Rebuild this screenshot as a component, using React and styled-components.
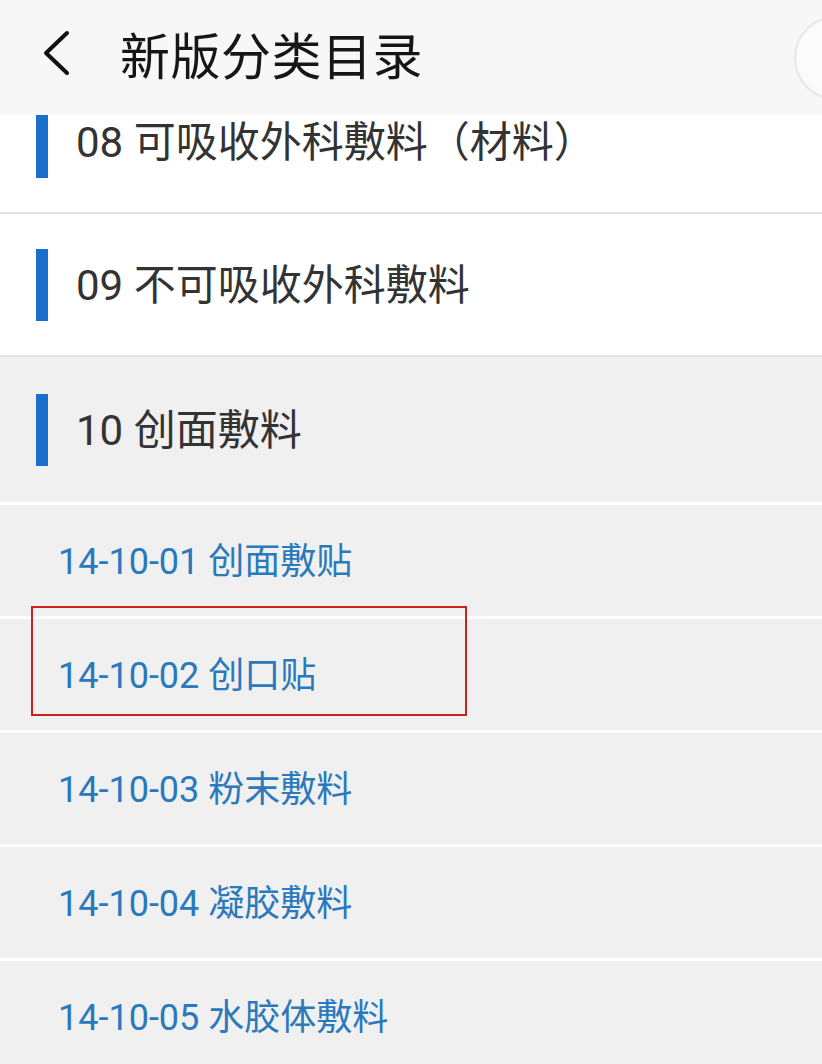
import React from "react";
import styled, { createGlobalStyle } from "styled-components";

const GlobalStyle = createGlobalStyle`
  html, body {
    margin: 0;
    padding: 0;
    background: #f0f0f0;
  }
  body {
    font-family: Roboto, "Noto Sans CJK SC", sans-serif;
  }
`;

const Page = styled.div`
  width: 822px;
  height: 1064px;
  overflow: hidden;
  display: flex;
  flex-direction: column;
  background: #f0f0f0;
`;

const Header = styled.div`
  flex: 0 0 115px;
  display: flex;
  align-items: center;
  background: #f7f7f7;
  padding: 0 0 10px 42px;
  box-sizing: border-box;
  position: relative;
  z-index: 1;
`;

const BackButton = styled.div`
  width: 32px;
  height: 46px;
  display: flex;
  align-items: center;
  margin-right: 46px;
`;

const Title = styled.h1`
  margin: 0;
  font-family: "Noto Sans CJK SC", sans-serif;
  font-weight: 400;
  font-size: 50px;
  color: #161616;
  letter-spacing: 0.5px;
`;

const MenuCircle = styled.div`
  margin-left: auto;
  margin-right: -56px;
  margin-top: 10px;
  width: 80px;
  height: 80px;
  border-radius: 50%;
  background: #fbfbfb;
  border: 2px solid #e6e6e6;
  flex: 0 0 auto;
`;

const Viewport = styled.div`
  flex: 1;
  overflow: hidden;
  position: relative;
`;

const List = styled.div`
  margin-top: -44px;
`;

const Category = styled.div`
  height: ${(p) => (p.$open ? "145px" : "141px")};
  display: flex;
  align-items: center;
  background: ${(p) => (p.$open ? "#f0f0f0" : "#ffffff")};
  border-bottom: ${(p) => (p.$open ? "3px solid #ffffff" : "2px solid #e4e4e4")};
  padding-left: 36px;
`;

const Bar = styled.span`
  width: 12px;
  height: 72px;
  background: #1b6fcc;
  margin-right: 28px;
`;

const CategoryName = styled.span`
  font-size: 42px;
  color: #333333;
  line-height: 1;
  padding-top: 2px;
`;

const SubItem = styled.div`
  height: 111px;
  display: flex;
  align-items: center;
  padding-left: 58px;
  background: #f0f0f0;
  border-bottom: 3px solid #ffffff;
`;

const SubName = styled.span`
  font-size: 36px;
  color: #2a79bd;
  line-height: 1;
  padding-top: 3px;
`;

const Highlight = styled.div`
  position: absolute;
  left: 31px;
  top: 491px;
  width: 432px;
  height: 106px;
  border: 2px solid #c9211b;
  pointer-events: none;
  z-index: 2;
`;

const categories = [
  { name: "08 可吸收外科敷料（材料）" },
  { name: "09 不可吸收外科敷料" },
  {
    name: "10 创面敷料",
    open: true,
    items: [
      "14-10-01 创面敷贴",
      "14-10-02 创口贴",
      "14-10-03 粉末敷料",
      "14-10-04 凝胶敷料",
      "14-10-05 水胶体敷料",
    ],
  },
];

const ChevronLeft = () => (
  <svg width="28" height="46" viewBox="0 0 28 46" fill="none">
    <path
      d="M25 3 L4 23 L25 43"
      stroke="#111"
      strokeWidth="4"
      strokeLinecap="round"
      strokeLinejoin="round"
    />
  </svg>
);

export default function App() {
  return (
    <>
      <GlobalStyle />
      <Page>
        <Header>
          <BackButton>
            <ChevronLeft />
          </BackButton>
          <Title>新版分类目录</Title>
          <MenuCircle />
        </Header>
        <Viewport>
          <List>
            {categories.map((c) => (
              <React.Fragment key={c.name}>
                <Category $open={c.open}>
                  <Bar />
                  <CategoryName>{c.name}</CategoryName>
                </Category>
                {c.open &&
                  c.items.map((item) => (
                    <SubItem key={item}>
                      <SubName>{item}</SubName>
                    </SubItem>
                  ))}
              </React.Fragment>
            ))}
          </List>
          <Highlight />
        </Viewport>
      </Page>
    </>
  );
}
